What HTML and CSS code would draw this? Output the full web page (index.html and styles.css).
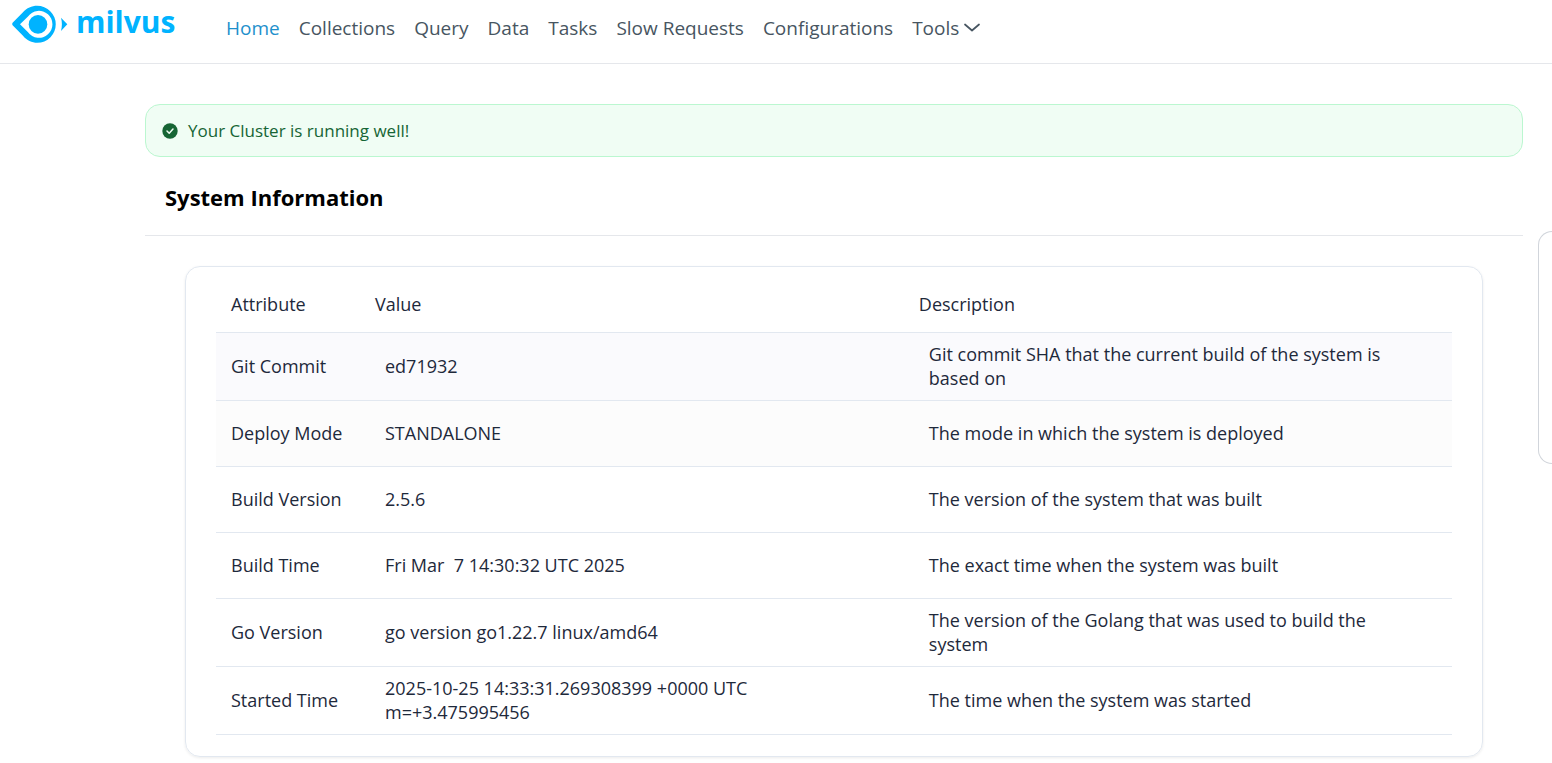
FILE: index.html
```html
<!DOCTYPE html>
<html lang="en">
<head>
    <meta charset="UTF-8">
    <meta name="viewport" content="width=device-width, initial-scale=1.0">
    <title>Milvus WebUI</title>
    <link rel="stylesheet" href="styles.css">
</head>
<body>
    <!-- top navigation -->
    <header class="navbar">
        <a class="brand" href="#" aria-label="milvus">
            <svg width="168" height="44" viewBox="0 0 168 44">
                <path fill="#00b3ff" fill-rule="evenodd" d="M.6 22.8C.1 23.400.1 24.600.6 25.200L11 35.800C18 44.800 31 45 38.500 37.200A18.500 18.500 0 0 0 38.500 11.400C31 3.500 18 3.800 11 12.200ZM8 24.300L16 16.400A13.500 13.500 0 1 1 16 32.200Z"/>
                <circle cx="26" cy="24.400" r="9.300" fill="#00b3ff"/>
                <path fill="#00b3ff" d="M49 17.800L55.300 24.300L49 31C50.200 26.500 50.200 22.200 49 17.800Z"/>
                <text class="wordmark" x="64" y="33">milvus</text>
            </svg>
        </a>
        <nav class="menu">
            <a class="active" href="#">Home</a>
            <a href="#">Collections</a>
            <a href="#">Query</a>
            <a href="#">Data</a>
            <a href="#">Tasks</a>
            <a href="#">Slow Requests</a>
            <a href="#">Configurations</a>
            <button type="button">Tools
                <svg width="16" height="10" viewBox="0 0 16 10"><path d="M1 1.500L8 7.500L15 1.500" fill="none" stroke="currentColor" stroke-width="1.700" stroke-linecap="round" stroke-linejoin="round"/></svg>
            </button>
        </nav>
    </header>

    <div class="page">
        <main>
            <div class="alert">
                <svg width="16" height="16" viewBox="0 0 16 16"><circle cx="8" cy="8" r="7.700" fill="#166534"/><path d="M5 8L7.200 10.200L11 6" fill="none" stroke="#f0fdf4" stroke-width="1.500" stroke-linecap="round" stroke-linejoin="round"/></svg>
                <span>Your Cluster is running well!</span>
            </div>

            <h2>System Information</h2>

            <div class="card">
                <table>
                    <thead>
                        <tr><th class="attr">Attribute</th><th class="value">Value</th><th>Description</th></tr>
                    </thead>
                    <tbody>
                        <tr><td>Git Commit</td><td>ed71932</td><td>Git commit SHA that the current build of the system is based on</td></tr>
                        <tr><td>Deploy Mode</td><td>STANDALONE</td><td>The mode in which the system is deployed</td></tr>
                        <tr><td>Build Version</td><td>2.5.6</td><td>The version of the system that was built</td></tr>
                        <tr><td>Build Time</td><td>Fri Mar&nbsp; 7 14:30:32 UTC 2025</td><td>The exact time when the system was built</td></tr>
                        <tr><td>Go Version</td><td>go version go1.22.7 linux/amd64</td><td>The version of the Golang that was used to build the system</td></tr>
                        <tr><td>Started Time</td><td>2025-10-25 14:33:31.269308399 +0000 UTC m=+3.475995456</td><td>The time when the system was started</td></tr>
                    </tbody>
                </table>
            </div>
        </main>

        <!-- side panel, only its rounded left edge shows -->
        <aside class="side"></aside>
    </div>
</body>
</html>
```

FILE: styles.css
```css
*{
    box-sizing: border-box;
    margin: 0;
    padding: 0;
}
body{
    background: #fff;
    color: #1e293b;
    font-family: "Open Sans", "Noto Sans", sans-serif;
    font-size: 18px;
    line-height: 24px;
}
.navbar{
    display: flex;
    height: 64px;
    padding-left: 12px;
    border-bottom: 1px solid #e5e7eb;
}
.brand svg{
    display: block;
}
.wordmark{
    font: bold 30px "Open Sans", sans-serif;
    fill: #00b3ff;
}
.menu{
    display: flex;
    gap: 19px;
    margin-left: 46px;
    padding-top: 16px;
    font-size: 19px;
}
.menu a,.menu button{
    color: #475561;
    text-decoration: none;
    white-space: nowrap;
}
.menu button{
    display: flex;
    align-items: center;
    gap: 5px;
    height: 24px;
    border: 0;
    background: none;
    font: inherit;
    cursor: pointer;
}
.menu a.active{
    color: #1e90cc;
}
.page{
    display: grid;
    grid-template-columns: minmax(0, 1fr) 14px;
    gap: 15px;
    padding: 40px 0 6px 145px;
}
.alert{
    display: flex;
    align-items: center;
    gap: 10px;
    height: 53px;
    padding: 0 16px;
    border: 1px solid #bbf7d0;
    border-radius: 15px;
    background: #f0fdf4;
    color: #166534;
    font-size: 17px;
}
h2{
    padding: 26px 20px 24px;
    border-bottom: 1px solid #e5e7eb;
    color: #000;
    font-size: 22px;
    line-height: 28px;
}
.card{
    margin: 30px 40px 0;
    padding: 9px 30px 21px;
    border: 1px solid #e2e8f0;
    border-radius: 15px;
    box-shadow: 0 1px 3px rgba(0, 0, 0, 0.08);
}
table{
    width: 100%;
    table-layout: fixed;
    border-collapse: collapse;
}
th,td{
    height: 66px;
    border-bottom: 1px solid #e2e8f0;
    text-align: left;
    vertical-align: middle;
}
th{
    height: 56px;
    padding: 0 15px;
    font-weight: normal;
}
td{
    padding: 9px 25px 10px;
}
td:first-child{
    padding: 0 15px;
}
.attr{
    width: 144px;
}
.value{
    width: 44%;
}
tbody tr:nth-child(1){
    background: #fafafd;
}
tbody tr:nth-child(2){
    background: #fcfcfc;
}
.side{
    height: 233px;
    margin-top: 127px;
    border: 1px solid #d1d5db;
    border-right: 0;
    border-radius: 15px 0 0 15px;
}
```
